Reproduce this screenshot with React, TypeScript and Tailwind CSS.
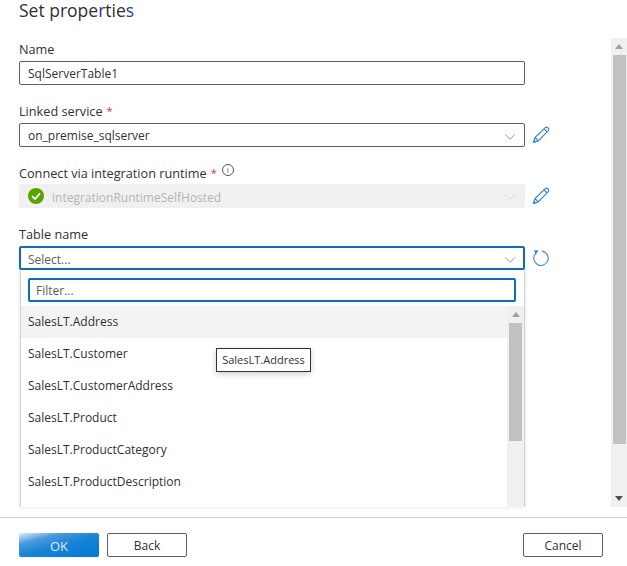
import { ChevronDown } from 'lucide-react';

const font = { fontFamily: '"Open Sans", "Noto Sans", sans-serif' };

const tables = [
  'SalesLT.Address',
  'SalesLT.Customer',
  'SalesLT.CustomerAddress',
  'SalesLT.Product',
  'SalesLT.ProductCategory',
  'SalesLT.ProductDescription',
];

const PencilIcon = () => (
  <svg width="18" height="18" viewBox="0 0 18 18" fill="none" stroke="#2f80d0" strokeWidth="1.1">
    <path d="M1.5 16.5 L3 11.5 L13 1.8 C14 0.9 15.2 1 16 1.8 C16.9 2.7 16.9 3.9 16 4.8 L6.2 14.9 Z" />
    <path d="M3 11.5 L6.2 14.9 M12 2.8 L15 5.8" />
    <path d="M1.2 16.8 L2 13.8 L4.2 16 Z" fill="#2f80d0" stroke="none" />
  </svg>
);

const RefreshIcon = () => (
  <svg width="18" height="18" viewBox="0 0 18 18" fill="none" stroke="#3a88d4" strokeWidth="1.1">
    <path d="M10 2.1 A7.2 7.2 0 1 1 3.2 5" />
    <path d="M2.2 1.2 L6.6 1.6 L3.4 6 Z" fill="#3a88d4" stroke="none" />
  </svg>
);

const Field = ({ label, required, info, className, children }: { label: string; required?: boolean; info?: boolean; className: string; children: React.ReactNode }) => (
  <div className={className}>
    <div className={`h-[19px] flex items-start text-[12.7px] leading-[14px] text-[#323130] font-[500] ${info ? 'pt-[1px]' : ''}`}>
      {label}
      {required && <span className="ml-[4px] text-[11px] font-normal text-[#d13438]">*</span>}
      {info && (
        <span className="ml-[5px] -mt-[2px] w-[12px] h-[12px] rounded-full border border-[#555] flex items-center justify-center text-[8px] leading-none text-[#555]">
          i
        </span>
      )}
    </div>
    {children}
  </div>
);

const SelectBox = ({ text, disabled, children }: { text: string; disabled?: boolean; children?: React.ReactNode }) => (
  <div
    className={
      disabled
        ? 'w-[506px] h-[24px] rounded-[2px] bg-[#f0f0f0] flex items-center pl-[9px] pr-[6px] text-[12px] text-[#b4b4b4]'
        : 'w-[506px] h-[24px] rounded-[2px] border border-[#605e5c] bg-white flex items-center pl-[8px] pr-[5px] text-[12px] text-[#323130]'
    }
  >
    {children}
    <span className={disabled ? 'flex-1 pt-[4px]' : 'flex-1 pt-[2px]'}>{text}</span>
    <ChevronDown size={18} strokeWidth={0.9} className={disabled ? 'mt-[1px] text-[#c8c8c8]' : 'mt-[3px] text-[#666]'} />
  </div>
);

export default function App() {
  return (
    <div className="relative w-[627px] h-[566px] bg-white overflow-hidden flex flex-col text-[#323130]" style={font}>
      <div className="h-[38px] pl-[19px] text-[17.5px] leading-[21px] text-[#323130] font-[500]">
        Set prope<span className="text-[#2c2ca8]">r</span>tie<span className="text-[#2c3c98]">s</span>
      </div>

      <div className="flex h-[469px]">
        <div className="flex-1 pl-[19px]">
          <Field label="Name" className="mt-[4px]">
            <input
              readOnly
              value="SqlServerTable1"
              className="block w-[506px] h-[24px] rounded-[2px] border border-[#605e5c] px-[8px] text-[12px] text-[#323130] outline-none"
            />
          </Field>

          <Field label="Linked service" required className="mt-[19px]">
            <div className="flex items-center gap-[7px]">
              <SelectBox text="on_premise_sqlserver" />
              <PencilIcon />
            </div>
          </Field>

          <Field label="Connect via integration runtime" required info className="mt-[18px]">
            <div className="flex items-center gap-[7px]">
              <SelectBox text="integrationRuntimeSelfHosted" disabled>
                <svg width="16" height="16" viewBox="0 0 16 16" className="mr-[8px]">
                  <circle cx="8" cy="8" r="8" fill="#57a300" />
                  <path d="M4 8.2 L7 11 L12 5.4" fill="none" stroke="#fff" strokeWidth="1.8" />
                </svg>
              </SelectBox>
              <PencilIcon />
            </div>
          </Field>

          <Field label="Table name" className="relative mt-[19px]">
            <div className="flex items-center gap-[7px]">
              <div className="w-[506px] h-[24px] rounded-[2px] border-2 border-[#0f6cbd] bg-white flex items-center pl-[7px] pr-[4px] text-[12px] text-[#605e5c]">
                <span className="flex-1 pt-[4px]">Select...</span>
                <ChevronDown size={18} strokeWidth={0.9} className="mt-[3px] text-[#666]" />
              </div>
              <RefreshIcon />
            </div>

            {/* dropdown panel */}
            <div className="absolute left-[1px] top-[43px] w-[505px] h-[237px] bg-white border-x border-[#d0d0d0] shadow-[0_0_4px_rgba(0,0,0,0.12)] flex flex-col">
              <div className="h-[36px] pt-[8px] pl-[7px]">
                <input
                  readOnly
                  placeholder="Filter..."
                  className="block w-[488px] h-[24px] rounded-[2px] border-2 border-[#0f6cbd] px-[6px] text-[12px] text-[#605e5c] placeholder:text-[#605e5c] outline-none"
                />
              </div>
              <div className="flex flex-1 min-h-0">
                <div className="flex-1">
                  {tables.map((t, i) => (
                    <div key={t} className={`h-[32px] flex items-center pl-[7px] text-[12px] text-[#323130] ${i === 0 ? 'bg-[#f3f3f3]' : ''}`}>
                      {t}
                    </div>
                  ))}
                </div>
                <div className="w-[17px] bg-[#f0f0f0] flex flex-col items-center">
                  <div className="h-[17px] flex items-center justify-center">
                    <div className="w-0 h-0 border-x-[4px] border-x-transparent border-b-[5px] border-b-[#a0a0a0]" />
                  </div>
                  <div className="w-[13px] h-[118px] bg-[#c1c1c1]" />
                </div>
              </div>
            </div>

            {/* tooltip */}
            <div className="absolute left-[197px] top-[121px] w-[95px] h-[24px] bg-white border border-[#333] shadow-[0_2px_6px_rgba(0,0,0,0.2)] flex items-center justify-center text-[11px] text-[#323130]">
              SalesLT.Address
            </div>
          </Field>
        </div>

        {/* page scrollbar */}
        <div className="w-[16px] bg-[#f0f0f0] flex flex-col items-center">
          <div className="h-[17px] w-full flex items-center justify-center">
            <div className="w-0 h-0 border-x-[4px] border-x-transparent border-b-[5px] border-b-[#a0a0a0]" />
          </div>
          <div className="w-[13px] h-[389px] bg-[#c1c1c1]" />
          <div className="flex-1" />
          <div className="h-[17px] w-full flex items-center justify-center">
            <div className="w-0 h-0 border-x-[4px] border-x-transparent border-t-[5px] border-t-[#505050]" />
          </div>
        </div>
      </div>

      <div className="mt-[10px] h-[49px] border-t border-[#d2d0ce] flex items-start pt-[15px] px-[19px] pr-[24px] gap-[8px]">
        <button className="w-[80px] h-[24px] pt-[2px] rounded-[2px] bg-[linear-gradient(165deg,#e4eff9_0%,#4b9bdc_25%,#1a84d6_50%,#0078d4_100%)] text-[13px] leading-none text-[#e0eefa]">
          OK
        </button>
        <button className="w-[80px] h-[24px] pt-[2px] rounded-[2px] border border-[#605e5c] bg-white text-[12px] leading-none text-[#323130]">
          Back
        </button>
        <div className="flex-1" />
        <button className="w-[80px] h-[24px] pt-[2px] rounded-[2px] border border-[#605e5c] bg-white text-[12px] leading-none text-[#323130]">
          Cancel
        </button>
      </div>
    </div>
  );
}
